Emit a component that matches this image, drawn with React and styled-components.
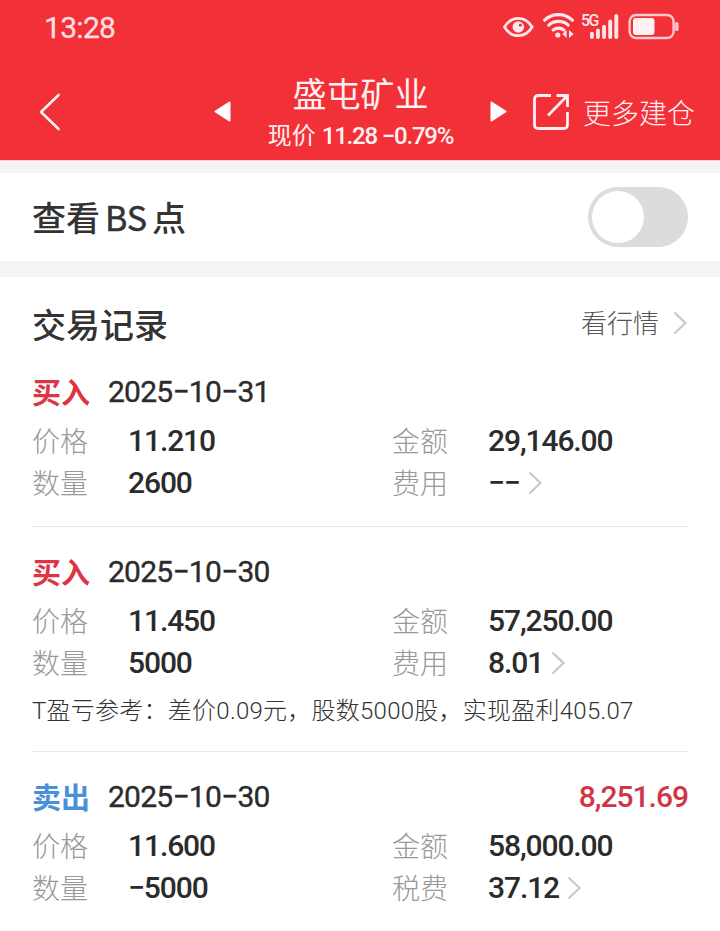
import React, { useState } from 'react'
import styled, { createGlobalStyle } from 'styled-components'

const records = [
    {
        id: 1,
        side: 'buy',
        date: '2025−10−31',
        price: '11.210',
        amount: '29,146.00',
        count: '2600',
        feeLabel: '费用',
        fee: '−−',
    },
    {
        id: 2,
        side: 'buy',
        date: '2025−10−30',
        price: '11.450',
        amount: '57,250.00',
        count: '5000',
        feeLabel: '费用',
        fee: '8.01',
        note: 'T盈亏参考：差价0.09元，股数5000股，实现盈利405.07',
    },
    {
        id: 3,
        side: 'sell',
        date: '2025−10−30',
        profit: '8,251.69',
        price: '11.600',
        amount: '58,000.00',
        count: '−5000',
        feeLabel: '税费',
        fee: '37.12',
    },
]

function StatusIcons() {
    return (
        <svg width="176" height="28" viewBox="0 0 176 28" fill="none">
            {/* eye */}
            <path d="M1.5 14C5 8.2 10 5.3 15.3 5.3S25.6 8.2 29.2 14C25.6 19.8 20.6 22.7 15.3 22.7S5 19.8 1.5 14Z" stroke="#ffe6e8" strokeWidth="2.8" />
            <circle cx="15.3" cy="14" r="5.8" fill="#ffe6e8" />
            <circle cx="17.3" cy="12.2" r="1.4" fill="#a8454c" />
            {/* wifi */}
            <g stroke="#ffe6e8" strokeWidth="3.2" strokeLinecap="round">
                <path d="M41.6 7.2C49.5-.2 61.5-.2 69.4 7.2" />
                <path d="M45.8 12.2C51.2 7.2 59.8 7.2 65.2 12.2" />
                <path d="M50.2 17C53.2 14.4 57.8 14.4 60.8 17" />
            </g>
            <circle cx="54.8" cy="22" r="2.6" fill="#ffe6e8" />
            <path d="M63.6 17V25L59.3 21ZM66 17V25L70.6 21Z" fill="#ffe6e8" />
            {/* signal */}
            <g stroke="#ffe6e8" strokeWidth="3.9" strokeLinecap="round">
                <path d="M88.9 20.8V24" />
                <path d="M94.9 17.4V24" />
                <path d="M101 13.8V24" />
                <path d="M107.2 8.5V24" />
                <path d="M113.3 3V24" />
            </g>
            {/* battery */}
            <rect x="126.6" y="2" width="44" height="23" rx="6.5" stroke="#ffc9cd" strokeWidth="2.4" />
            <rect x="130" y="5" width="21.5" height="17" rx="3" fill="#fff0f1" />
            <path d="M173.8 10.8V16.4" stroke="#ffc9cd" strokeWidth="3.4" strokeLinecap="round" />
        </svg>
    )
}

function Chevron({ width = 15, height = 24 }) {
    return (
        <svg width={width} height={height} viewBox="0 0 15 24" fill="none">
            <path d="M1.5 1.5L12.5 12L1.5 22.5" stroke="#c8c8c8" strokeWidth="2.2" />
        </svg>
    )
}

function Record({ item }) {
    return (
        <RecordBox>
            <RecordHead>
                <Side $side={item.side}>{item.side === 'buy' ? '买入' : '卖出'}</Side>
                <DateText>{item.date}</DateText>
                {item.profit && <Profit>{item.profit}</Profit>}
            </RecordHead>
            <Fields>
                <Label>价格</Label>
                <Value>{item.price}</Value>
                <Label>金额</Label>
                <Value>{item.amount}</Value>
                <Label>数量</Label>
                <Value>{item.count}</Value>
                <Label>{item.feeLabel}</Label>
                <Value>{item.fee}<Chevron /></Value>
            </Fields>
            {item.note && <Note>{item.note}</Note>}
        </RecordBox>
    )
}

export default function App() {
    const [showPoints, setShowPoints] = useState(false)

    return (
        <Page>
            <GlobalStyle />
            <Header>
                <StatusBar>
                    <Clock>13:28</Clock>
                    <FiveG>5G</FiveG>
                    <StatusIcons />
                </StatusBar>
                <NavBar>
                    <svg width="22" height="38" viewBox="0 0 22 38" fill="none">
                        <path d="M19.6 2L2 19L19.6 36" stroke="#fff0f1" strokeWidth="2.6" strokeLinecap="round" strokeLinejoin="round" />
                    </svg>
                    <Stock>
                        <svg width="17" height="21" viewBox="0 0 17 21">
                            <path d="M15.5 1.5V19.5L1.5 10.5Z" fill="#fff" stroke="#fff" strokeWidth="2" strokeLinejoin="round" />
                        </svg>
                        <StockInfo>
                            <StockName>盛屯矿业</StockName>
                            <StockPrice>现价 <b>11.28 −0.79%</b></StockPrice>
                        </StockInfo>
                        <svg width="17" height="21" viewBox="0 0 17 21">
                            <path d="M1.5 1.5V19.5L15.5 10.5Z" fill="#fff" stroke="#fff" strokeWidth="2" strokeLinejoin="round" />
                        </svg>
                    </Stock>
                    <MoreLink>
                        <svg width="38" height="38" viewBox="0 0 38 38" fill="none" stroke="#fff0f1" strokeWidth="2.8">
                            <path d="M19 2.5H6.5Q2.5 2.5 2.5 6.5V31.5Q2.5 35.5 6.5 35.5H31.5Q35.5 35.5 35.5 31.5V19" />
                            <path d="M24.5 2.5H35.5V14" />
                            <path d="M35.5 2.5L16 22.5" />
                        </svg>
                        更多建仓
                    </MoreLink>
                </NavBar>
            </Header>
            <SwitchRow>
                <SectionTitle>查看<Latin>BS</Latin>点</SectionTitle>
                <Toggle $on={showPoints} onClick={() => setShowPoints(!showPoints)} />
            </SwitchRow>
            <Trades>
                <TradesHead>
                    <SectionTitle>交易记录</SectionTitle>
                    <QuoteLink><span>看行情</span><Chevron /></QuoteLink>
                </TradesHead>
                {records.map((item) => <Record key={item.id} item={item} />)}
            </Trades>
        </Page>
    )
}

const GlobalStyle = createGlobalStyle`
    * {
        box-sizing: border-box;
    }
    body {
        margin: 0;
        background: #fff;
        font-family: Roboto, "Noto Sans CJK SC", sans-serif;
        color: #2b2b2b;
    }
    svg {
        display: block;
        flex-shrink: 0;
    }
`

const Page = styled.div`
    width: 720px;
    height: 931px;
    overflow: hidden;
    background: #f4f4f4;
`

const Header = styled.header`
    height: 160px;
    background: #f23038;
    box-shadow: 0 1px 0 #fbd3d6;
    color: #fff0f1;
`

const StatusBar = styled.div`
    display: flex;
    align-items: center;
    height: 54px;
    padding: 0 41px 0 44px;
`

const Clock = styled.span`
    flex: 1;
    font-size: 30px;
    letter-spacing: -0.7px;
    color: #ffdfe1;
    -webkit-text-stroke: 0.3px #ffdfe1;
`

// sits over the empty corner above the signal bars
const FiveG = styled.span`
    position: absolute;
    left: 581px;
    top: 12px;
    font-size: 16px;
    line-height: 18px;
    font-weight: 500;
    letter-spacing: -1.6px;
    color: #ffe6e8;
`

const NavBar = styled.div`
    display: flex;
    align-items: center;
    height: 106px;
    padding: 9px 25px 0 39px;
`

const Stock = styled.div`
    display: flex;
    align-items: center;
    justify-content: space-between;
    width: 293px;
    margin-left: 153px;
`

const StockInfo = styled.div`
    display: flex;
    flex-direction: column;
    align-items: center;
    padding-top: 3px;
    white-space: nowrap;
`

const StockName = styled.div`
    font-size: 34px;
    line-height: 46px;
    font-weight: 400;
`

const StockPrice = styled.div`
    font-size: 24px;
    line-height: 36px;
    b {
        font-weight: 500;
        letter-spacing: -1.2px;
    }
`

const MoreLink = styled.div`
    display: flex;
    align-items: center;
    gap: 13px;
    margin-left: auto;
    font-size: 28px;
    font-weight: 300;
    white-space: nowrap;
`

const SwitchRow = styled.section`
    display: flex;
    align-items: center;
    justify-content: space-between;
    height: 88px;
    margin: 13px 0 16px;
    padding: 0 32px;
    background: #fff;
`

const SectionTitle = styled.h2`
    margin: 0;
    padding-top: 2px;
    font-size: 34px;
    line-height: 44px;
    font-weight: 500;
    color: #333;
`

const Latin = styled.span`
    margin: 0 5px;
    font-family: "Noto Sans CJK SC", sans-serif;
    font-weight: 400;
    -webkit-text-stroke: 0.5px #333;
`

const Toggle = styled.button`
    display: flex;
    justify-content: ${props => props.$on ? 'flex-end' : 'flex-start'};
    width: 100px;
    height: 60px;
    padding: 4px;
    border: none;
    border-radius: 30px;
    background: ${props => props.$on ? '#f23038' : '#dcdcdc'};
    &::before {
        content: '';
        width: 52px;
        height: 52px;
        border-radius: 50%;
        background: #fff;
    }
`

const Trades = styled.section`
    height: 654px;
    padding: 25px 32px 0;
    background: #fff;
`

const TradesHead = styled.div`
    display: flex;
    justify-content: space-between;
    height: 44px;
`

const QuoteLink = styled.div`
    display: flex;
    align-items: center;
    gap: 14px;
    font-size: 26px;
    font-weight: 300;
    color: #555;
    span {
        padding-bottom: 5px;
    }
    svg {
        margin-bottom: 2px;
    }
`

const RecordBox = styled.article`
    padding: 23px 0 22px;
    border-top: 1px solid #e9e9e9;
    ${TradesHead} + & {
        border-top-color: transparent;
    }
`

const RecordHead = styled.div`
    display: flex;
    align-items: center;
    height: 42px;
`

const Side = styled.span`
    width: 76px;
    font-size: 29px;
    font-weight: 700;
    color: ${props => props.$side === 'buy' ? '#dc3545' : '#4a90d9'};
`

const DateText = styled.span`
    font-size: 30px;
    letter-spacing: -0.75px;
    -webkit-text-stroke: 0.35px #2b2b2b;
`

const Profit = styled.span`
    margin-left: auto;
    font-size: 30px;
    font-weight: 500;
    letter-spacing: -1px;
    color: #d23545;
`

const Fields = styled.div`
    display: grid;
    grid-template-columns: 96px 264px 96px 1fr;
    grid-template-rows: 42px 43px;
    align-items: center;
    margin-top: 7px;
`

const Label = styled.span`
    padding-top: 5px;
    font-size: 28px;
    line-height: 38px;
    font-weight: 300;
    color: #999;
`

const Value = styled.span`
    display: flex;
    align-items: center;
    gap: 8px;
    padding-top: 1px;
    font-size: 30px;
    line-height: 40px;
    font-weight: 500;
    letter-spacing: -1.1px;
`

const Note = styled.p`
    margin: 9px 0 0;
    font-size: 24px;
    line-height: 36px;
    font-weight: 300;
    letter-spacing: 0.25px;
    white-space: nowrap;
    color: #333;
`
